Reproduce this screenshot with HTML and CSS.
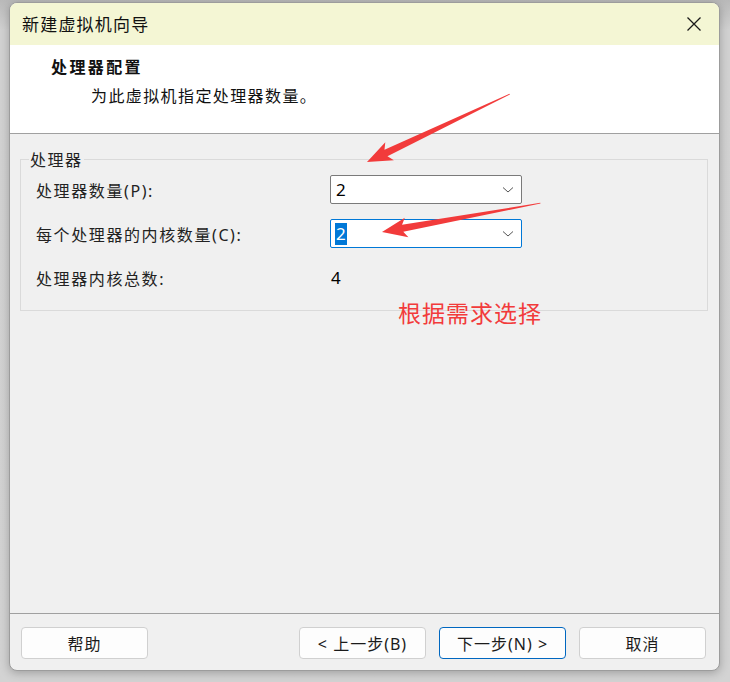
FILE: index.html
```html
<!DOCTYPE html>
<html lang="zh-CN">
<head>
<meta charset="utf-8">
<title>新建虚拟机向导</title>
<link rel="stylesheet" href="styles.css">
</head>
<body>
<div class="desk">
  <div class="window">
    <div class="titlebar">
      <span class="title">新建虚拟机向导</span>
      <span class="close" aria-label="关闭">
        <svg width="16" height="16" viewBox="0 0 16 16"><path d="M1.5 1.5 L14.5 14.5 M14.5 1.5 L1.5 14.5" stroke="#1a1a1a" stroke-width="1.3" fill="none"/></svg>
      </span>
    </div>
    <div class="header">
      <div class="h-title">处理器配置</div>
      <div class="h-sub">为此虚拟机指定处理器数量。</div>
    </div>
    <div class="content">
      <fieldset class="group">
        <legend class="legend">处理器</legend>
        <div class="grid">
          <label class="lbl">处理器数量(P):</label>
          <div class="combo">
            <span class="val">2</span>
            <svg class="chev" width="12" height="8" viewBox="0 0 12 8"><path d="M1 1.5 L6 6 L11 1.5" stroke="#555" stroke-width="1" fill="none"/></svg>
          </div>
          <label class="lbl">每个处理器的内核数量(C):</label>
          <div class="combo focus">
            <span class="val sel">2</span>
            <svg class="chev" width="12" height="8" viewBox="0 0 12 8"><path d="M1 1.5 L6 6 L11 1.5" stroke="#555" stroke-width="1" fill="none"/></svg>
          </div>
          <span class="lbl">处理器内核总数:</span>
          <span class="total">4</span>
        </div>
      </fieldset>
    </div>
    <div class="footer">
      <button class="btn">帮助</button>
      <div class="nav">
        <button class="btn">&lt; 上一步(<u class="k">B</u>)</button>
        <button class="btn primary">下一步(<u class="k">N</u>) &gt;</button>
        <button class="btn">取消</button>
      </div>
    </div>
  </div>
  <div class="note">根据需求选择</div>
  <svg class="arrows" width="730" height="682" viewBox="0 0 730 682">
    <g transform="translate(367 162) rotate(-25.4)" fill="#f23b3b">
      <polygon points="0,0 25,-10 21,-3.5 158,-0.4 158,0.4 21,3.5 25,10"/>
    </g>
    <g transform="translate(382 232) rotate(-10.3)" fill="#f23b3b">
      <polygon points="0,0 25,-10 21,-3.5 161,-0.4 161,0.4 21,3.5 25,10"/>
    </g>
  </svg>
</div>
</body>
</html>
```
FILE: styles.css
```css
* { box-sizing: border-box; }
html, body { margin: 0; padding: 0; }
body {
  width: 730px;
  height: 682px;
  overflow: hidden;
  background: #cbcbcb;
  font-family: "Noto Sans", "Noto Sans CJK SC", sans-serif;
  color: #1b1b1b;
}
.desk {
  position: relative;
  width: 730px;
  height: 682px;
  padding: 2px 10px 0 9px;
  background: linear-gradient(#b9b9b9, #d2d2d2 30px, #d3d3d3);
}
.window {
  width: 711px;
  height: 669px;
  background: #f0f0f0;
  border: 1px solid #9c9c9c;
  border-radius: 8px;
  overflow: hidden;
  display: flex;
  flex-direction: column;
  box-shadow: 0 2px 10px rgba(0,0,0,0.25);
}
.titlebar {
  height: 42px;
  flex: none;
  background: #f4f6d4;
  display: flex;
  align-items: center;
  justify-content: space-between;
  padding: 0 17px 1px 12px;
}
.title {
  font-family: "Noto Sans CJK SC", sans-serif;
  font-size: 17px;
  letter-spacing: 1.2px;
  color: #111;
}
.close { display: flex; }
.header {
  height: 89px;
  flex: none;
  background: #fff;
  border-bottom: 1px solid #a0a0a0;
  padding: 9px 0 0 41px;
}
.h-title {
  font-family: "Noto Sans CJK SC", sans-serif;
  font-weight: 700;
  font-size: 16px;
  letter-spacing: 2.4px;
  line-height: 24px;
  color: #111;
}
.h-sub {
  font-family: "Noto Sans CJK SC", sans-serif;
  font-size: 16px;
  letter-spacing: 1.4px;
  line-height: 24px;
  margin: 5px 0 0 40px;
  color: #111;
}
.content {
  flex: 1;
  padding: 15px 11px 0 10px;
}
.group {
  margin: 0;
  border: 1px solid #dadada;
  padding: 6px 0 12px 15px;
  height: 162px;
}
.legend {
  font-family: "Noto Sans CJK SC", sans-serif;
  font-size: 16px;
  letter-spacing: 1.5px;
  padding: 0 1px;
  margin-left: -7px;
  line-height: 20px;
  color: #222;
}
.grid {
  display: grid;
  grid-template-columns: 294px 192px;
  grid-auto-rows: 29px;
  row-gap: 15px;
  align-items: center;
}
.lbl {
  font-family: "Noto Sans", "Noto Sans CJK SC", sans-serif;
  font-size: 16px;
  letter-spacing: 1.6px;
  color: #222;
}
.combo {
  height: 29px;
  background: #fff;
  border: 1px solid #7a7a7a;
  border-radius: 2px;
  display: flex;
  align-items: center;
  justify-content: space-between;
  padding: 0 7px 0 4px;
}
.combo.focus { border-color: #0078d7; }
.val {
  font-size: 17px;
  line-height: 22px;
  color: #000;
  padding: 0 1px;
}
.val.sel {
  background: #0078d7;
  color: #fff;
}
.total {
  font-size: 17px;
  color: #000;
  padding-left: 1px;
}
.footer {
  flex: none;
  height: 57px;
  border-top: 1px solid #a0a0a0;
  display: flex;
  justify-content: space-between;
  align-items: flex-start;
  padding: 13px 13px 0 11px;
}
.nav { display: flex; gap: 13px; }
.btn {
  width: 127px;
  height: 32px;
  background: #fdfdfd;
  border: 1px solid #d0d0d0;
  border-radius: 4px;
  font-family: "Noto Sans", "Noto Sans CJK SC", sans-serif;
  font-size: 16px;
  letter-spacing: 1px;
  color: #1b1b1b;
  padding: 0;
}
.btn.primary { border-color: #0067c0; }
.k { text-decoration: none; }
.note {
  position: absolute;
  left: 398px;
  top: 297px;
  font-family: "Noto Sans CJK SC", sans-serif;
  font-size: 23px;
  line-height: 30px;
  color: #f23b3b;
  letter-spacing: 1px;
}
.arrows {
  position: absolute;
  left: 0;
  top: 0;
  pointer-events: none;
}
```
